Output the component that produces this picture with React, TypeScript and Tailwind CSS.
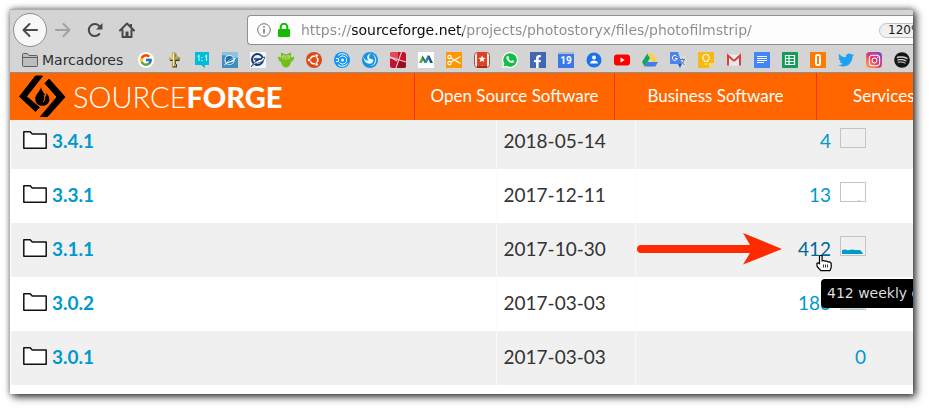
import type { ReactNode } from "react";
import { FaFacebookF, FaInstagram, FaSpotify, FaTwitter } from "react-icons/fa";
import { FcGoogle } from "react-icons/fc";

function Glyph({ children }: { children: ReactNode }) {
  return (
    <svg viewBox="0 0 16 16" className="size-4" aria-hidden="true">
      {children}
    </svg>
  );
}

const bookmarks: { name: string; icon: ReactNode }[] = [
  {
    name: "Google",
    icon: (
      <span className="flex size-4 items-center justify-center rounded-full bg-white">
        <FcGoogle size={14} />
      </span>
    ),
  },
  {
    name: "Cross",
    icon: (
      <Glyph>
        <path d="M7 2h3.500L10 5.500h3.500V9h-3.700v3h1l.2 3.500H6.300L7 12V9H4V6h3z" fill="#3c3415" />
        <path d="M6 .5h4L9.500 4.500h3.300v3.300H9.300L9 12h1v2.500H5.800V12l.8-4H3V5h3.500z" fill="#b7a04d" />
        <path d="M7 1h1v13H7zM3.500 5.500H8v1H3.500z" fill="#f3ebb5" />
      </Glyph>
    ),
  },
  {
    name: "Actual size",
    icon: (
      <Glyph>
        <path d="M1 0h14v13h-4v3l-4-3H1z" fill="#00bcd9" />
        <path d="M3.500 4.500 5 3.500V9M11 4.500l1.500-1V9M8 5v1M8 8v1" fill="none" stroke="#b9f3fb" strokeWidth="1.200" />
      </Glyph>
    ),
  },
  {
    name: "Bluefish",
    icon: (
      <Glyph>
        <path d="M0 0h16v16H0z" fill="#3f8fc3" />
        <path d="M0 0h16v6L0 3z" fill="#8ec1e0" />
        <circle cx="7.500" cy="8" r="4.500" fill="#1d6ca8" stroke="#d9eefa" strokeWidth="1.200" />
        <path d="M2 14C4 9 8 6.500 14 5.500c-1 3-3 4.500-6 5-2 .5-4 1.500-6 3.500z" fill="#e5f5fd" />
        <path d="M5 10c1.500-2 4-3 7-3.500-1 1.500-3 2.500-7 3.500z" fill="#1d6ca8" />
      </Glyph>
    ),
  },
  {
    name: "Seahawk",
    icon: (
      <Glyph>
        <path d="M0 0h16v16H0z" fill="#f4f6fa" />
        <circle cx="7.500" cy="7.500" r="5.500" fill="#e9eef5" stroke="#153a73" strokeWidth="2" />
        <path d="M1 15C4 10 8 7.500 15 5c-1 4-4 5.500-7 6-3 .5-5 2-7 4z" fill="#fff" stroke="#153a73" strokeWidth=".8" />
        <path d="M4 7h8M5 9.500c2-1.500 4-2.500 7-3" stroke="#153a73" fill="none" strokeWidth="1.300" />
      </Glyph>
    ),
  },
  {
    name: "Duolingo",
    icon: (
      <Glyph>
        <path d="M3 .5 8 2.500l5-2v5L16 4.500c.2 3-1 4.500-3 5.500-.5 3-2 4.500-3.500 5L9 16l-1-1-1 1-.5-1C5 14.500 3.500 13 3 10 1 9 0 7.500 0 4.500l3 1z" fill="#6fc01b" />
        <circle cx="5.800" cy="5" r="1.700" fill="#d9f0b4" />
        <circle cx="10.200" cy="5" r="1.700" fill="#d9f0b4" />
        <path d="M5.500 4.500h1v1.200h-1zM9.500 4.500h1v1.200h-1z" fill="#333" />
        <path d="m8 5.500 1.500 1.500L8 8.500 6.500 7z" fill="#f3a61c" />
      </Glyph>
    ),
  },
  {
    name: "Ubuntu",
    icon: (
      <Glyph>
        <circle cx="8" cy="8" r="8" fill="#dd4814" />
        <circle cx="8" cy="8" r="3.800" fill="none" stroke="#fff" strokeWidth="1.700" />
        <circle cx="3" cy="8" r="1.700" fill="#fff" stroke="#dd4814" strokeWidth=".7" />
        <circle cx="10.600" cy="3.600" r="1.700" fill="#fff" stroke="#dd4814" strokeWidth=".7" />
        <circle cx="10.600" cy="12.400" r="1.700" fill="#fff" stroke="#dd4814" strokeWidth=".7" />
      </Glyph>
    ),
  },
  {
    name: "Signal",
    icon: (
      <Glyph>
        <circle cx="8" cy="8" r="8" fill="#1094fb" />
        <circle cx="8.500" cy="8" r="1.500" fill="#fff" />
        <path d="M5.500 5.500A4 4 0 1 1 5.500 10.500M4 3.500a6 6 0 0 1 9.500 1.200M4 12.500a6 6 0 0 0 9.500-1.200M2 6.500h2.500v3H2" fill="none" stroke="#fff" />
      </Glyph>
    ),
  },
  {
    name: "Deepin",
    icon: (
      <Glyph>
        <circle cx="8" cy="8" r="8" fill="#1792de" />
        <path d="M1 4c1 6 4 8.500 8 7.500 3-1 3-4.500.5-4.500C7 7 6 4 9 1.500 5 2 4 6 6.500 8.500 4 9 2 7 1 4z" fill="#e1f5ff" />
        <path d="M10 2c3 1 5 4 4 8-1 3-4 4.500-7 4 4-.5 6-3 6-6s-1-4.500-3-6z" fill="#bfe8fc" />
      </Glyph>
    ),
  },
  {
    name: "Red tiles",
    icon: (
      <Glyph>
        <rect width="16" height="16" rx="2.500" fill="#c7102d" />
        <path d="M0 2.500A2.500 2.500 0 0 1 2.500 0H8v7H0z" fill="#e34a59" />
        <path d="M8 9h8v4.500a2.500 2.500 0 0 1-2.500 2.500H7z" fill="#960f22" />
        <path d="M11.500 0 6 16M0 5l16 5M0 5l7 4" stroke="#f6d4d6" strokeWidth="1.100" fill="none" />
      </Glyph>
    ),
  },
  {
    name: "Mountains",
    icon: (
      <Glyph>
        <path d="M0 0h16v16H0z" fill="#fff" />
        <path d="M1 11 4.500 3.500 6.500 7 3.500 11z" fill="#63a83b" />
        <path d="M4.500 3.500 8 9l-1.500 2L4 6z" fill="#2d7d4d" />
        <path d="M6 11 9.500 3.500 11 7l-2.500 4z" fill="#2f8ac0" />
        <path d="M9.500 3.500h1.800L15 11h-3z" fill="#1b4f81" />
      </Glyph>
    ),
  },
  {
    name: "Scissors",
    icon: (
      <Glyph>
        <path d="M0 0h16v16H0z" fill="#ff9800" />
        <circle cx="3.500" cy="5" r="1.700" fill="none" stroke="#fff" strokeWidth="1.200" />
        <circle cx="3.500" cy="11" r="1.700" fill="none" stroke="#fff" strokeWidth="1.200" />
        <path d="m5 6 9.500 5.500M5 10l9.500-5.500" stroke="#fff" strokeWidth="1.300" />
      </Glyph>
    ),
  },
  {
    name: "Wunderlist",
    icon: (
      <Glyph>
        <rect x=".5" y=".5" width="15" height="15" rx="3" fill="#f5eee8" stroke="#a3543f" />
        <path d="M3 0h10v16l-5-2.500L3 16z" fill="#df4127" />
        <path d="m8 3.500 1 2.300 2.500.2-1.900 1.600.6 2.400L8 8.700 5.800 10l.6-2.400L4.500 6 7 5.800z" fill="#fff" />
        <path d="M3 14h10v2H3z" fill="#a52d1b" />
      </Glyph>
    ),
  },
  {
    name: "WhatsApp",
    icon: (
      <Glyph>
        <path d="M8 0a8 8 0 1 1-3.600 15.100L0 16l1-4.300A8 8 0 0 1 8 0z" fill="#fff" />
        <path d="M8 1.200A6.800 6.800 0 1 1 4.500 13.800l-3 .8.900-2.900A6.800 6.800 0 0 1 8 1.200z" fill="#12bd45" />
        <path d="M5.500 4c.8-.3 1.200.3 1.700 1.700-.6.800-.6 1 .2 2s1.500 1.400 2 1.300l.9-.9 1.900 1c.1 1.300-1 2.100-2.400 2C7 10.700 4.300 7.800 4.300 5.800c0-.8.500-1.500 1.200-1.800z" fill="#fff" />
      </Glyph>
    ),
  },
  {
    name: "Facebook",
    icon: (
      <span className="flex size-4 items-end justify-end bg-[#4267b2] pr-0.5 text-white">
        <FaFacebookF size={13} />
      </span>
    ),
  },
  {
    name: "Calendar",
    icon: (
      <span className="flex size-4 flex-col border-t-2 border-[#b4bccb] bg-[#3b78e7] text-center font-['Roboto',sans-serif] text-[10px] leading-[14px] font-bold text-white">
        19
      </span>
    ),
  },
  {
    name: "Contacts",
    icon: (
      <Glyph>
        <circle cx="8" cy="8" r="7.500" fill="#1a73e8" />
        <circle cx="8" cy="5.600" r="2" fill="#fff" />
        <path d="M4 11.500c0-2 2-3 4-3s4 1 4 3z" fill="#fff" />
      </Glyph>
    ),
  },
  {
    name: "YouTube",
    icon: (
      <Glyph>
        <rect y="2.500" width="16" height="11" rx="3" fill="#f00" />
        <path d="m6.500 5.500 4.200 2.500-4.200 2.500z" fill="#fff" />
      </Glyph>
    ),
  },
  {
    name: "Drive",
    icon: (
      <Glyph>
        <path d="M5.300 1.500 8 6 2.700 14.500 0 10z" fill="#11a560" />
        <path d="M5.300 1.500h5.400L16 10h-5.300z" fill="#ffcf48" />
        <path d="M5.400 10H16l-2.700 4.500H2.700z" fill="#3f7fe8" />
      </Glyph>
    ),
  },
  {
    name: "Translate",
    icon: (
      <Glyph>
        <path d="M6 4h9a1 1 0 0 1 1 1v10a1 1 0 0 1-1 1H10z" fill="#d9dde2" />
        <path d="M1 0h7l4 12H1a1 1 0 0 1-1-1V1a1 1 0 0 1 1-1z" fill="#4a83ec" />
        <path d="m8 12 4 0-2 4z" fill="#2f58c0" />
        <path d="M7 4.500A2.500 2.500 0 1 0 7.300 6.500H5" fill="none" stroke="#fff" />
        <path d="M10 7.500h5M12.500 6.500v1M14 8c-.5 2-1.500 3-3 4M11.500 9.500l3 3.500" fill="none" stroke="#65788c" />
      </Glyph>
    ),
  },
  {
    name: "Keep",
    icon: (
      <Glyph>
        <path d="M1 0h14a1 1 0 0 1 1 1v10l-5 5H1a1 1 0 0 1-1-1V1a1 1 0 0 1 1-1z" fill="#f6b919" />
        <path d="M11 11h5l-5 5z" fill="#ffdc5c" />
        <path d="M6.500 9.500V8.500a3.200 3.200 0 1 1 3 0v1zM6.500 12h3" fill="none" stroke="#fff4c5" strokeWidth="1.200" />
      </Glyph>
    ),
  },
  {
    name: "Gmail",
    icon: (
      <Glyph>
        <path d="M1 2.500h14v11H1z" fill="#ececec" />
        <path d="M2 13.500v-10l6 5.500 6-5.500v10" fill="none" stroke="#d93f35" strokeWidth="2" />
        <path d="m3.500 13 4.500-4 4.500 4" fill="none" stroke="#cfcfcf" strokeWidth=".7" />
      </Glyph>
    ),
  },
  {
    name: "Docs",
    icon: (
      <Glyph>
        <rect width="16" height="16" rx="1" fill="#4285f4" />
        <path d="M3 4.500h10M3 6.500h10M3 8.500h10M3 10.500h7" stroke="#fff" />
      </Glyph>
    ),
  },
  {
    name: "Sheets",
    icon: (
      <Glyph>
        <rect width="16" height="16" rx="1" fill="#0f9d58" />
        <path d="M3.500 3.500h9v9h-9zM3.500 6.500h9M3.500 9.500h9M7 3.500v9" fill="none" stroke="#fff" strokeWidth="1.200" />
      </Glyph>
    ),
  },
  {
    name: "Zero",
    icon: (
      <Glyph>
        <path d="M0 0h16v16H0z" fill="#ff7a00" />
        <rect x="6" y="3" width="4" height="10" rx="1.500" fill="none" stroke="#fff" strokeWidth="2" />
      </Glyph>
    ),
  },
  { name: "Twitter", icon: <FaTwitter size={16} color="#1da1f2" /> },
  {
    name: "Instagram",
    icon: (
      <span className="flex size-4 items-center justify-center rounded bg-linear-to-tr from-[#fdb040] via-[#e42d6b] to-[#7a3bcf] text-white">
        <FaInstagram size={13} />
      </span>
    ),
  },
  { name: "Spotify", icon: <FaSpotify size={16} color="#131516" /> },
];

type Release = { version: string; date: string; downloads: string; chart?: string; tint?: string };

const releases: Release[] = [
  { version: "3.4.1", date: "2018-05-14", downloads: "4", chart: "" },
  { version: "3.3.1", date: "2017-12-11", downloads: "13", chart: "M17 18h4v1h-4z", tint: "#cbe8f5" },
  { version: "3.1.1", date: "2017-10-30", downloads: "412", chart: "M2 18v-4l3-.5 3 .7 4-.7 3 .5h5l2 2 1 2z", tint: "#0099cc" },
  { version: "3.0.2", date: "2017-03-03", downloads: "183", chart: "M2 17h22v2H2z", tint: "#b9e3f3" },
  { version: "3.0.1", date: "2017-03-03", downloads: "0" },
];

function NavigationBar() {
  return (
    <div className="flex h-10 items-center">
      <button aria-label="Back" className="ml-[3px] flex size-[34px] shrink-0 items-center justify-center rounded-full border border-[#8f8f8f] bg-[#f7f7f7]">
        <svg viewBox="0 0 16 16" className="size-4" fill="none" stroke="#484848" strokeWidth="2" strokeLinecap="round" strokeLinejoin="round">
          <path d="M15 8H1.500M7.500 2l-6 6 6 6" />
        </svg>
      </button>
      <button aria-label="Forward" className="ml-2 shrink-0">
        <svg viewBox="0 0 16 16" className="size-4" fill="none" stroke="#a0a0a0" strokeWidth="2" strokeLinecap="round" strokeLinejoin="round">
          <path d="M1 8h13.500M8.500 2l6 6-6 6" />
        </svg>
      </button>
      <button aria-label="Reload" className="ml-4 shrink-0">
        <svg viewBox="0 0 16 16" className="size-4" fill="none" stroke="#484848" strokeWidth="2" strokeLinecap="round">
          <path d="M12.300 12A6 6 0 1 1 12 3.700L13 5" />
          <path d="M15.500 1v6.500H9z" fill="#484848" stroke="none" />
        </svg>
      </button>
      <button aria-label="Home" className="ml-4 shrink-0">
        <svg viewBox="0 0 16 16" className="size-4" fill="none" stroke="#484848" strokeWidth="2" strokeLinecap="round" strokeLinejoin="round">
          <path d="m1 8.500 7-7 7 7M3.500 8v7h9V8" />
          <path d="M6.500 9.500h3V15h-3z" fill="#484848" stroke="none" />
          <path d="M11 2h2v3h-2z" fill="#484848" stroke="none" />
        </svg>
      </button>
      <div className="ml-28 flex h-[30px] min-w-0 flex-1 items-center rounded-l border border-r-0 border-[#8f8f8f] bg-[#fdfdfd] pl-[9px]">
        <svg viewBox="0 0 14 14" className="size-3.5 shrink-0" fill="none" stroke="#737373" aria-hidden="true">
          <circle cx="7" cy="7" r="6.300" />
          <path d="M7 6v4.500M7 3.300v1.400" strokeWidth="1.500" />
        </svg>
        <svg viewBox="0 0 12 14" className="ml-[7px] h-3.5 w-3 shrink-0" aria-hidden="true">
          <path d="M2.700 7V4a3.300 3.300 0 0 1 6.600 0v3" fill="none" stroke="#12bc00" strokeWidth="2" />
          <rect y="6" width="12" height="8" rx="1" fill="#12bc00" />
        </svg>
        <input
          aria-label="Address"
          defaultValue="https://sourceforge.net/projects/photostoryx/files/photofilmstrip/"
          className="ml-[11px] h-7 min-w-0 flex-1 bg-[linear-gradient(90deg,#8c8c8c_50px,#0c0c0d_50px,#0c0c0d_162px,#8c8c8c_162px)] bg-clip-text font-['DejaVu_Sans',sans-serif] text-sm text-transparent outline-none"
        />
        <div className="flex w-[34px] shrink-0 overflow-hidden">
          <button className="h-[15px] w-14 shrink-0 rounded-full border border-[#c2c2c2] bg-[#f0f0f0] pl-2 text-left font-['DejaVu_Sans',sans-serif] text-xs leading-[13px] text-[#1a1a1a]">
            120%
          </button>
        </div>
      </div>
    </div>
  );
}

function BookmarksBar() {
  return (
    <nav aria-label="Bookmarks" className="flex h-5 items-center overflow-hidden pl-3">
      <button className="flex w-[116px] shrink-0 items-center gap-1 font-['DejaVu_Sans',sans-serif] text-sm leading-5 text-[#2f2f2f]">
        <svg viewBox="0 0 16 14" className="h-3.5 w-4 shrink-0" fill="#bdbdbd" stroke="#5c5c5c" aria-hidden="true">
          <path d="M.5 12.500v-11a1 1 0 0 1 1-1h4l1.500 2h7.500a1 1 0 0 1 1 1v9a1 1 0 0 1-1 1h-13a1 1 0 0 1-1-1zM.5 4.500h15" />
        </svg>
        Marcadores
      </button>
      <ul className="flex gap-3">
        {bookmarks.map((b) => (
          <li key={b.name}>
            <a href="#" aria-label={b.name} className="block size-4">
              {b.icon}
            </a>
          </li>
        ))}
      </ul>
    </nav>
  );
}

function SiteHeader() {
  return (
    <header className="flex h-[47px] overflow-hidden bg-[#ff6600] font-['Lato',sans-serif] text-white">
      <a href="#" className="flex w-[404px] shrink-0 items-center pl-2">
        <svg viewBox="4 1.500 48 44" className="h-11 w-12 shrink-0" fill="#000" stroke="#000" strokeLinejoin="round" aria-hidden="true">
          <path d="M21.500 2.500H28.500L12.500 23 25.500 34 21.500 38 5.500 23z" />
          <path d="M35 5.500 51 23.500 33.500 43H26.500L43 23.500 31 10z" />
          <path d="M27 13.500c.5 4.500 4 5.500 4.500 10 .8-.8 1-2 .8-4 2 2 3 4 3 6.500 0 4-3 6.300-7 6.300s-7-2.800-7-6.800c0-5 4.500-7 5.700-12z" stroke="none" />
          <path d="M30 21.500c1.500 2.500.8 5.500-1 7" fill="none" stroke="#ff6600" />
        </svg>
        <span className="ml-[7px] text-[29px] leading-[47px] font-light">
          SOURCE<b className="font-black">FORGE</b>
        </span>
      </a>
      <nav aria-label="Site" className="flex flex-1 text-[17px] leading-[45px] whitespace-nowrap">
        <a href="#" className="w-[200px] shrink-0 border-l border-[#ff3300] text-center">Open Source Software</a>
        <a href="#" className="w-[202px] shrink-0 border-l border-[#ff3300] text-center">Business Software</a>
        <a href="#" className="shrink-0 border-l border-[#ff3300] px-9">Services</a>
      </nav>
    </header>
  );
}

function DownloadChart({ shape, tint }: { shape: string; tint?: string }) {
  return (
    <svg viewBox="0 0 26 20" className="mb-1.5 h-5 w-[26px]" aria-hidden="true">
      <rect x=".5" y=".5" width="25" height="19" fill="none" stroke="#c4c4c4" />
      <path d={shape} fill={tint} />
    </svg>
  );
}

function HoverDetails() {
  return (
    <>
      <svg viewBox="0 0 146 32" className="absolute top-2.5 left-0 h-8 w-[146px]" aria-hidden="true">
        <path d="M5 12h109L107 0l39 16-39 15.500 7-11.500H5a4 4 0 0 1 0-8z" fill="#ff2a00" />
      </svg>
      <svg viewBox="0 0 17 17" className="absolute top-8 right-20 z-20 size-[17px]" aria-hidden="true">
        <path
          d="M3.500 1.500a1.300 1.300 0 0 1 2.600 0V6l1.500-.5 1.400.7 1.600-.2 1.400.9 1.500-.1 1.700 1.500v4l-1.200 3.300H4.800L1.200 11.500.8 8.500l1.200-.7 1.500 1z"
          fill="#fff" stroke="#000" strokeWidth="1.200" strokeLinejoin="round"
        />
        <path d="M7.500 9.500v3M9.500 9.500v3M11.500 9.500v3" stroke="#000" strokeWidth=".8" />
      </svg>
      <div role="tooltip" className="absolute top-14 right-0 z-10 w-[92px] rounded-l bg-black pl-1.5 text-left font-['DejaVu_Sans',sans-serif] text-sm leading-[29px] whitespace-nowrap text-[#dedede]">
        412 weekly downloads
      </div>
    </>
  );
}

function FilesTable() {
  return (
    <div className="overflow-hidden bg-white pb-[9px] pl-px">
      <table className="-mt-[5px] w-full table-fixed border-collapse font-['Lato',sans-serif] text-[19px] leading-6 text-[#333333]">
        <colgroup>
          <col className="w-[485px]" />
          <col className="w-[139px]" />
          <col />
        </colgroup>
        <tbody>
          {releases.map((r) => (
            <tr key={r.version} className="h-[54px] odd:bg-[#f0f0f0]">
              <th scope="row" className="p-0 pb-0.5 pl-3 text-left">
                <a href="#" className="flex items-center gap-[5px] font-bold text-[#0099cc]">
                  <svg viewBox="0 0 24 18" className="mb-0.5 h-[18px] w-6" fill="#fff" stroke="#111" strokeWidth="1.500" strokeLinejoin="round" aria-hidden="true">
                    <path d="M.8 17.200V.8h6.400l2 2.200h14v14.200z" />
                  </svg>
                  {r.version}
                </a>
              </th>
              <td className="border-l border-[#fafafa] p-0 pb-0.5 pl-[7px]">{r.date}</td>
              <td className="relative border-l border-[#fafafa] p-0 pr-[47px] pb-0.5">
                <div className="flex h-6 items-center justify-end gap-[9px]">
                  <a href="#" className={r.version === "3.1.1" ? "text-[#006699]" : "text-[#0099cc]"}>
                    {r.downloads}
                  </a>
                  {r.chart !== undefined && <DownloadChart shape={r.chart} tint={r.tint} />}
                </div>
                {r.version === "3.1.1" && <HoverDetails />}
              </td>
            </tr>
          ))}
        </tbody>
      </table>
    </div>
  );
}

export default function App() {
  return (
    <div className="bg-white pt-[9px] pr-4 pb-4 pl-2.5">
      <main className="overflow-hidden shadow-[3px_3px_8px_rgba(0,0,0,0.75),0_0_6px_rgba(0,0,0,0.4)]">
        <div className="border-y border-t-[#acacac] border-b-[#8f8f8f] bg-[#d4d4d4] pb-0.5">
          <NavigationBar />
          <BookmarksBar />
        </div>
        <SiteHeader />
        <FilesTable />
      </main>
    </div>
  );
}
